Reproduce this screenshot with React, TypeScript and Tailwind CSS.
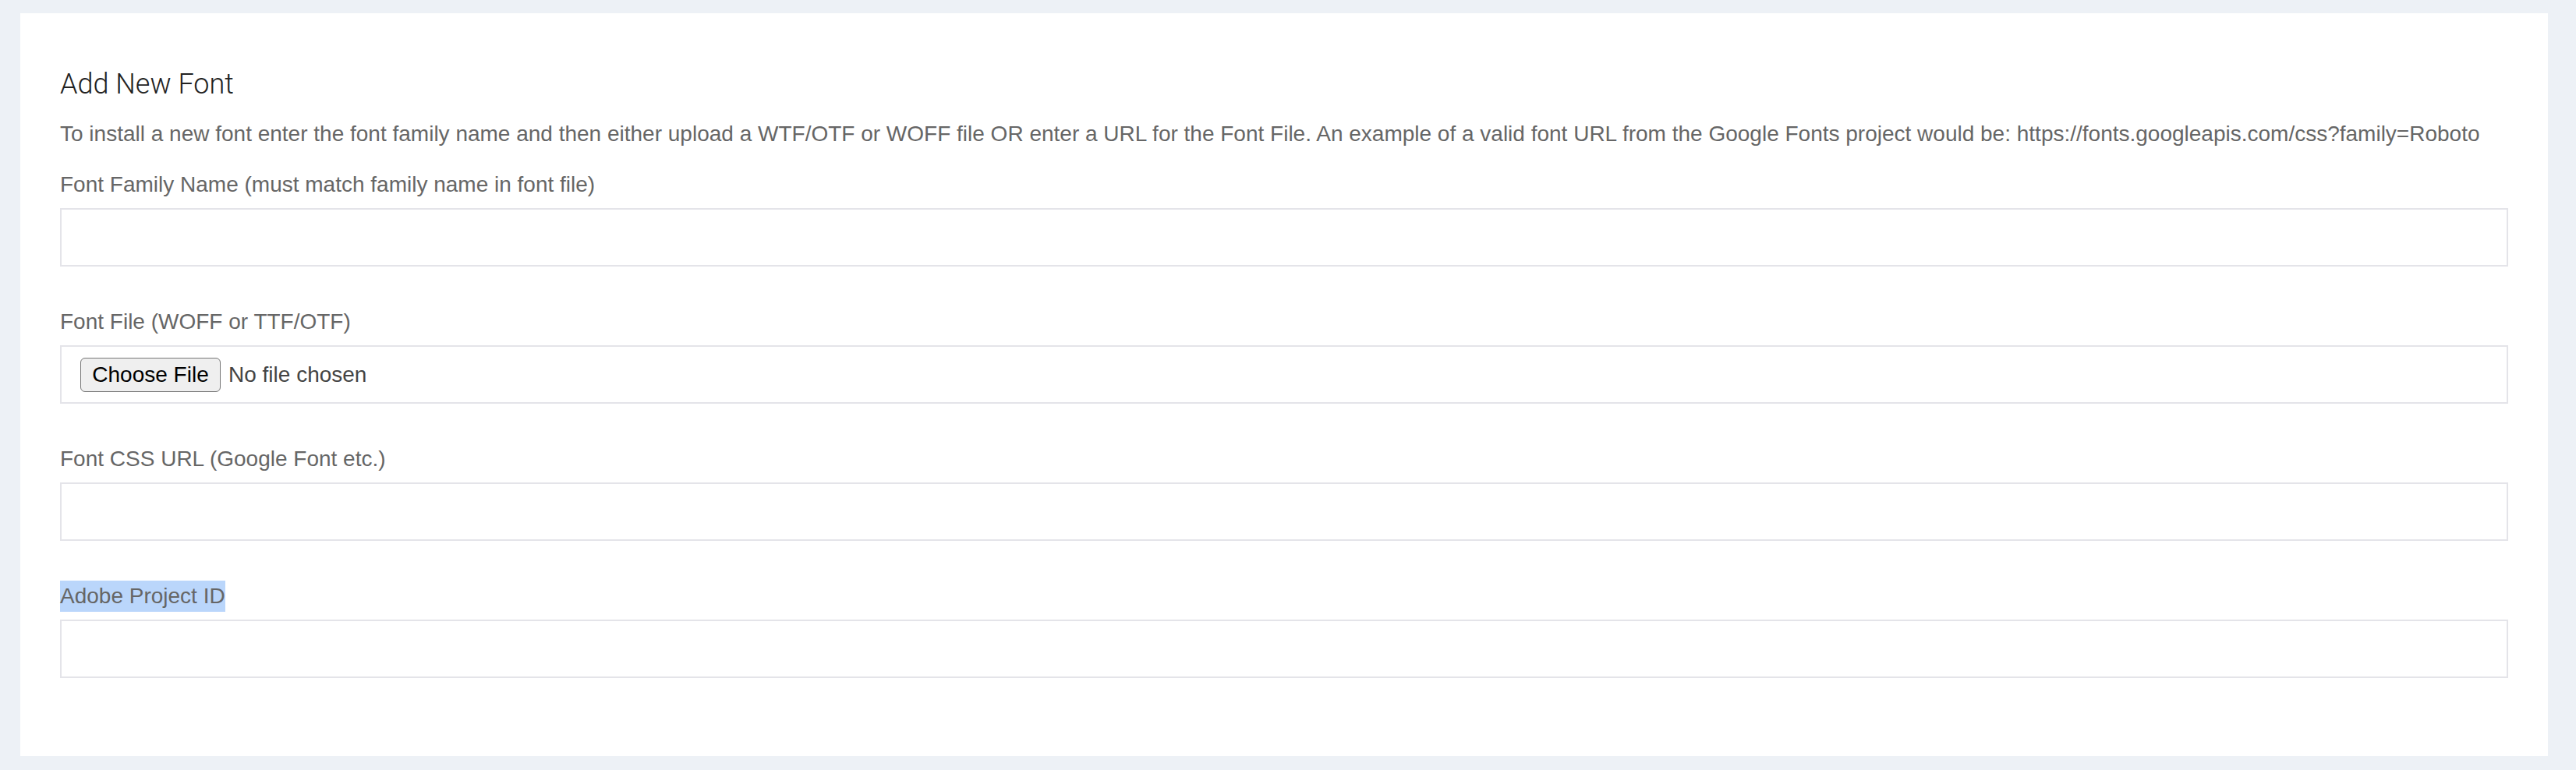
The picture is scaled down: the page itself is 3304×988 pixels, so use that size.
import React from 'react'

const fields = [
  { label: 'Font Family Name (must match family name in font file)', type: 'text' },
  { label: 'Font File (WOFF or TTF/OTF)', type: 'file' },
  { label: 'Font CSS URL (Google Font etc.)', type: 'text' },
  { label: 'Adobe Project ID', type: 'text', selected: true },
]

export default function App() {
  return (
    <div className="min-h-screen bg-[#edf1f6] pl-[26px] pr-[36px] pt-[17px] pb-[18px] font-['Liberation_Sans',Arial,sans-serif]">
      <div className="bg-white px-[51px] pt-[50px] pb-[49px]">
        {/* Header */}
        <h1 className="mt-[20px] font-['Roboto',sans-serif] text-[36px] font-light leading-[43px] text-[#222]">
          Add New Font
        </h1>
        <p className="mt-[22px] text-[28px] leading-[40px] text-[#666]">
          To install a new font enter the font family name and then either upload a WTF/OTF or WOFF file OR enter a URL for the Font File. An example of a valid font URL from the Google Fonts project would be: https://fonts.googleapis.com/css?family=Roboto
        </p>

        {/* Form */}
        <form className="mt-[25px]">
          {fields.map((field) => (
            <div key={field.label} className="mb-[51px]">
              <label className="block text-[28px] leading-[40px] text-[#666]">
                {field.selected ? (
                  <span className="inline-block bg-[#bad6fb]">{field.label}</span>
                ) : (
                  field.label
                )}
              </label>
              {field.type === 'file' ? (
                <div className="mt-[10px] flex h-[75px] items-center border-2 border-[#e4e4e9] px-[24px]">
                  <span className="flex h-[44px] w-[180px] items-center justify-center rounded-[6px] border-[1.5px] border-[#767676] bg-[#efefef] text-[28px] text-black">
                    Choose File
                  </span>
                  <span className="ml-[10px] text-[28px] text-[#444]">No file chosen</span>
                </div>
              ) : (
                <input
                  type="text"
                  className="mt-[10px] block h-[75px] w-full border-2 border-[#e4e4e9] bg-white px-4 text-[28px] outline-none"
                />
              )}
            </div>
          ))}
        </form>
      </div>
    </div>
  )
}
